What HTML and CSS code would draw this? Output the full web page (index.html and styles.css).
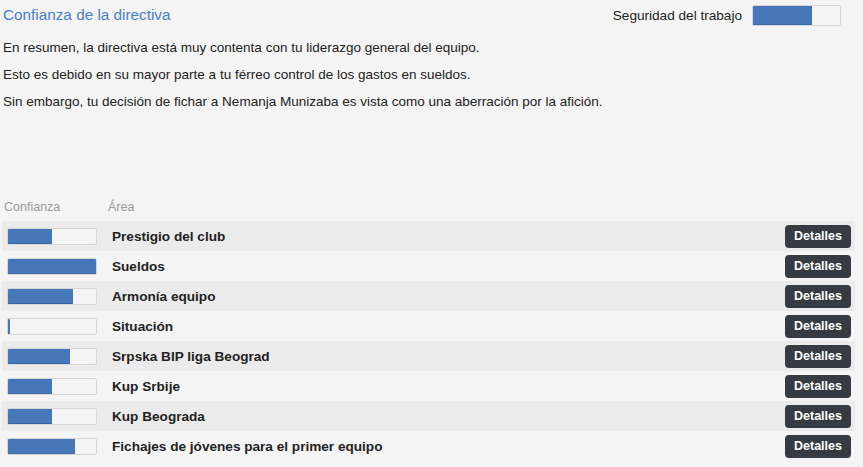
FILE: index.html
```html
<!DOCTYPE html>
<html>
<head>
<meta charset="utf-8">
<link rel="stylesheet" href="styles.css">
</head>
<body>
<div class="page">
  <div class="top">
    <h1 class="title">Confianza de la directiva</h1>
    <div class="security">
      <span class="security-label">Seguridad del trabajo</span>
      <div class="bar bar-lg"><div class="fill" style="width:68%"></div></div>
    </div>
  </div>
  <div class="summary">
    <p>En resumen, la directiva está muy contenta con tu liderazgo general del equipo.</p>
    <p>Esto es debido en su mayor parte a tu férreo control de los gastos en sueldos.</p>
    <p>Sin embargo, tu decisión de fichar a Nemanja Munizaba es vista como una aberración por la afición.</p>
  </div>
  <div class="table">
    <div class="thead">
      <span class="col-conf">Confianza</span>
      <span class="col-area">Área</span>
    </div>
    <div class="row odd">
      <div class="col-conf"><div class="bar"><div class="fill" style="width:50%"></div></div></div>
      <div class="col-area name">Prestigio del club</div>
      <button class="btn">Detalles</button>
    </div>
    <div class="row">
      <div class="col-conf"><div class="bar"><div class="fill" style="width:100%"></div></div></div>
      <div class="col-area name">Sueldos</div>
      <button class="btn">Detalles</button>
    </div>
    <div class="row odd">
      <div class="col-conf"><div class="bar"><div class="fill" style="width:74%"></div></div></div>
      <div class="col-area name">Armonía equipo</div>
      <button class="btn">Detalles</button>
    </div>
    <div class="row">
      <div class="col-conf"><div class="bar"><div class="fill" style="width:2%"></div></div></div>
      <div class="col-area name">Situación</div>
      <button class="btn">Detalles</button>
    </div>
    <div class="row odd">
      <div class="col-conf"><div class="bar"><div class="fill" style="width:70%"></div></div></div>
      <div class="col-area name">Srpska BIP liga Beograd</div>
      <button class="btn">Detalles</button>
    </div>
    <div class="row">
      <div class="col-conf"><div class="bar"><div class="fill" style="width:50%"></div></div></div>
      <div class="col-area name">Kup Srbije</div>
      <button class="btn">Detalles</button>
    </div>
    <div class="row odd">
      <div class="col-conf"><div class="bar"><div class="fill" style="width:50%"></div></div></div>
      <div class="col-area name">Kup Beograda</div>
      <button class="btn">Detalles</button>
    </div>
    <div class="row">
      <div class="col-conf"><div class="bar"><div class="fill" style="width:76%"></div></div></div>
      <div class="col-area name">Fichajes de jóvenes para el primer equipo</div>
      <button class="btn">Detalles</button>
    </div>
  </div>
</div>
</body>
</html>
```

FILE: styles.css
```css
html, body {
  margin: 0;
  padding: 0;
  background: #f4f4f4;
}
body {
  font-family: "Liberation Sans", Arial, sans-serif;
  color: #222;
  width: 863px;
  height: 467px;
  overflow: hidden;
}
.page {
  padding: 0 8px 0 2px;
}
.top {
  display: flex;
  justify-content: space-between;
  align-items: center;
  height: 30px;
}
.title {
  margin: 0 0 0 1px;
  font-size: 15.3px;
  font-weight: normal;
  color: #4a7fc8;
}
.security {
  display: flex;
  align-items: center;
  gap: 10px;
  margin-right: 14px;
}
.security-label {
  font-size: 13.6px;
  color: #222;
}
.summary {
  padding-left: 1px;
  height: 159px;
}
.summary p {
  margin: 0;
  font-size: 13.5px;
  line-height: 27px;
}
.summary p:first-child {
  margin-top: 4px;
}
.thead {
  display: flex;
  height: 28px;
  align-items: center;
  font-size: 12.5px;
  color: #9a9a9a;
}
.col-conf {
  width: 104px;
  padding-left: 2px;
  box-sizing: border-box;
  flex: none;
}
.col-area {
  flex: 1;
  padding-left: 2px;
}
.row {
  display: flex;
  align-items: center;
  height: 30px;
}
.row.odd {
  background: #ebebeb;
}
.row .col-conf {
  padding-left: 5px;
}
.name {
  font-size: 13.6px;
  font-weight: bold;
  color: #222;
  padding-left: 6px;
}
.bar {
  width: 90px;
  height: 17px;
  box-sizing: border-box;
  border: 1px solid #d6d6d6;
  border-radius: 2px;
  background: #f4f4f4;
  overflow: hidden;
}
.bar-lg {
  width: 89px;
  height: 21px;
}
.fill {
  height: 100%;
  background: #4677b8;
  box-shadow: inset 0 -1px 0 #3c69a6;
}
.btn {
  flex: none;
  margin-right: 4px;
  height: 23px;
  width: 66px;
  border: none;
  border-radius: 4px;
  background: #363a42;
  color: #fff;
  font-family: "Liberation Sans", Arial, sans-serif;
  font-weight: bold;
  font-size: 12.5px;
  padding: 0;
}
```
